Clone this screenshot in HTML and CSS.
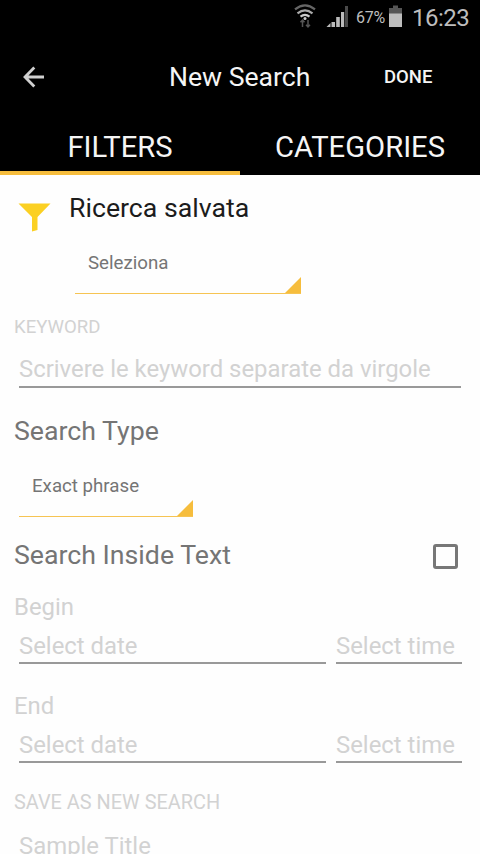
FILE: index.html
```html
<!DOCTYPE html>
<html lang="it">
<head>
<meta charset="utf-8">
<title>New Search</title>
<link rel="stylesheet" href="styles.css">
</head>
<body>
<header class="top">
  <div class="status">
    <svg class="status-icons" width="122" height="36" viewBox="0 0 122 36">
      <g fill="none" stroke="#aaa" stroke-width="2.2">
        <path d="M15 9.300Q25 1.300 35 9.300" stroke="#666"/>
        <path d="M17.500 13.400Q25 7.400 32.500 13.400"/>
        <path d="M20.500 16.600Q25 13 29.500 16.600" stroke="#ccc"/>
      </g>
      <circle cx="25" cy="18.500" r="1.500" fill="#ccc"/>
      <path d="M22.500 20v7M20.500 22.200l2-2.200 2 2.200M28 20v7M26 24.800l2 2.200 2-2.200" stroke="#555" stroke-width="1.500" fill="none"/>
      <path d="M46.500 27l4-4v4z" fill="#bbb"/>
      <path d="M51.500 22h3.500v5h-3.500zM56.200 17h3.600v10h-3.600zM61 12h3.200v15h-3.200z" fill="#bbb"/>
      <path d="M65 6h3v21h-3z" fill="#4a4a4a"/>
      <path d="M109 8h4V5.500h5V8h4v6h-13z" fill="#555"/>
      <path d="M109 13.500h13V27h-13z" fill="#bdbdbd"/>
    </svg>
    <span class="percent">67%</span>
    <span class="clock">16:23</span>
  </div>
  <div class="bar">
    <svg class="back" width="22" height="22" viewBox="0 0 22 22"><path d="M11.300 1.500L2 11l9.300 9.500M2 11h19" fill="none" stroke="#d0d0d0" stroke-width="2.800"/></svg>
    <h1 class="title">New Search</h1>
    <span class="done">DONE</span>
  </div>
  <nav class="tabs">
    <span class="tab active">FILTERS</span>
    <span class="tab">CATEGORIES</span>
  </nav>
</header>
<main class="form">
  <section class="saved">
    <svg class="funnel" width="32" height="30" viewBox="0 0 32 30"><path d="M.5.5h32L19.500 14V27L14 28.500V14z" fill="#fbd023"/></svg>
    <div class="saved-body">
      <h2 class="heading dark">Ricerca salvata</h2>
      <div class="spinner wide"><span class="choice">Seleziona</span></div>
    </div>
  </section>
  <div class="label keyword">KEYWORD</div>
  <div class="field keywords"><span>Scrivere le keyword separate da virgole</span></div>
  <h2 class="heading type">Search Type</h2>
  <div class="spinner narrow"><span class="choice phrase">Exact phrase</span></div>
  <div class="check-row">
    <h2 class="heading inside">Search Inside Text</h2>
    <span class="checkbox"></span>
  </div>
  <div class="when">Begin</div>
  <div class="pair">
    <div class="field"><span>Select date</span></div>
    <div class="field"><span>Select time</span></div>
  </div>
  <div class="when end">End</div>
  <div class="pair">
    <div class="field"><span>Select date</span></div>
    <div class="field"><span>Select time</span></div>
  </div>
  <div class="label save">SAVE AS NEW SEARCH</div>
  <div class="sample">Sample Title</div>
</main>
</body>
</html>
```
FILE: styles.css
```css
* { box-sizing: border-box; }
html, body { margin: 0; height: 854px; overflow: hidden; }
body { width: 480px; background: #fefefe; color: #757575; font-family: Roboto, "Liberation Sans", sans-serif; white-space: nowrap; }
h1, h2 { margin: 0; font-weight: 400; }
svg { display: block; flex: none; }
.top { height: 175px; background: #000; color: #f5f5f5; }
.status { height: 36px; display: flex; padding-left: 280px; color: #bdbdbd; }
.status-icons { margin-right: -46px; }
.percent { width: 56px; font-size: 16px; line-height: 36px; letter-spacing: -0.3px; }
.clock { font-size: 24px; line-height: 37px; letter-spacing: -0.5px; }
.bar { height: 82px; display: flex; align-items: center; }
.back { margin-left: 23px; }
.title { width: 215px; margin-left: 124px; font-size: 26.6px; line-height: 82px; }
.done { font-size: 18.5px; font-weight: 500; }
.tabs { height: 57px; display: grid; grid-template-columns: 1fr 1fr; }
.tab { height: 57px; text-align: center; font-size: 29.2px; line-height: 58px; }
.active { border-bottom: 4px solid #f6bd3d; }
.form { height: 679px; overflow: hidden; }
.saved { height: 133px; display: flex; padding: 13px 0 0 18px; }
.funnel { margin: 15px 19px 0 0; overflow: visible; }
.heading { font-size: 26.7px; line-height: 40px; }
.dark { color: #1c1c1c; }
.spinner { height: 45px; position: relative; border-bottom: 1px solid #f6c453; }
.spinner::after { content: ""; position: absolute; right: 0; bottom: 0; width: 16px; height: 16px; background: #f6bd3d; clip-path: polygon(100% 0, 100% 100%, 0 100%); }
.wide { width: 226px; margin: 21px 0 0 6px; padding-left: 13px; }
.narrow { width: 174px; margin: 21px 0 0 19px; padding-left: 13px; }
.choice { display: block; font-size: 18.7px; line-height: 29px; }
.label { height: 36px; padding-left: 14px; color: #d2d2d2; line-height: 36px; }
.keyword { font-size: 18.6px; line-height: 38px; }
.field { height: 36px; border-bottom: 2px solid #999; color: #d2d2d2; font-size: 23.9px; line-height: 36px; }
.keywords { margin: 8px 19px 0; line-height: 34px; }
.type { margin: 23px 0 0 14px; }
.check-row { height: 52px; display: flex; justify-content: space-between; align-items: center; margin-top: 12px; padding: 0 22px 0 14px; }
.checkbox { width: 25px; height: 25px; margin-top: 2px; border: 3px solid #777; border-radius: 3px; }
.when { height: 40px; margin-top: 7px; padding-left: 14px; color: #d2d2d2; font-size: 23.9px; line-height: 38px; }
.pair { display: grid; grid-template-columns: 307px 126px; column-gap: 10px; margin-left: 19px; }
.end { margin-top: 23px; }
.save { margin-top: 22px; font-size: 19.9px; }
.sample { padding-left: 19px; color: #d2d2d2; font-size: 23.9px; line-height: 50px; }
```
